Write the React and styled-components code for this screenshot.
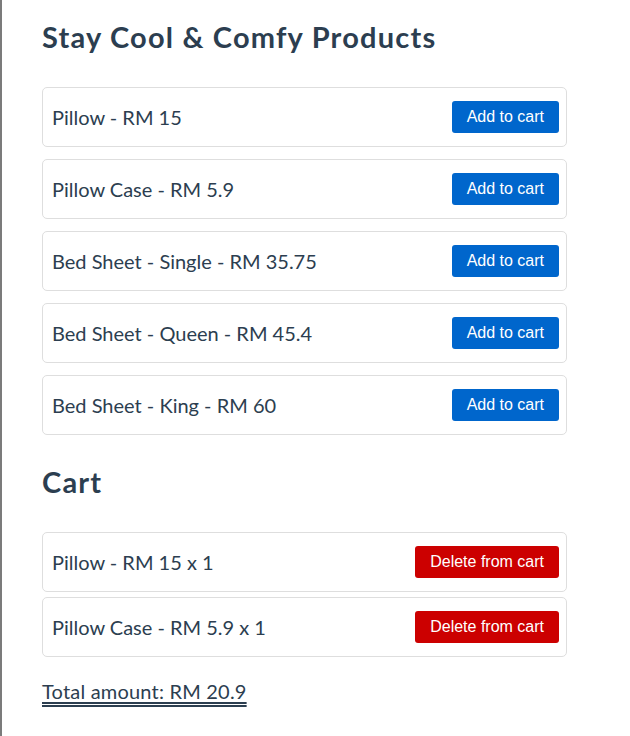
import React, { useState } from 'react';
import styled, { createGlobalStyle } from 'styled-components';

const GlobalStyle = createGlobalStyle`
  html, body {
    margin: 0;
    padding: 0;
    background: #fff;
  }
  body {
    font-family: Lato, "Noto Sans", sans-serif;
    color: #2c3e50;
  }
`;

const Page = styled.div`
  min-height: 736px;
  box-sizing: border-box;
  border-left: 2px solid #7b7b7b;
  padding: 20px 0 0 40px;
`;

const Shop = styled.div`
  width: 525px;
`;

const Title = styled.h1`
  margin: 0 0 33px;
  font-size: 29px;
  font-weight: 700;
  line-height: 34px;
  letter-spacing: 1.2px;
`;

const SubTitle = styled(Title)`
  margin: 30px 0 33px;
`;

const List = styled.div`
  display: flex;
  flex-direction: column;
  gap: ${props => props.gap}px;
`;

const Item = styled.div`
  display: flex;
  align-items: center;
  justify-content: space-between;
  height: 58px;
  padding: 0 7px 0 9px;
  border: 1px solid #dedede;
  border-radius: 5px;
`;

const Label = styled.span`
  font-size: 20px;
`;

const Button = styled.button`
  font-family: "Liberation Sans", Arial, sans-serif;
  font-size: 16px;
  height: 32px;
  padding: 0 15px;
  border: none;
  border-radius: 3px;
  color: #fff;
  background: ${props => (props.danger ? '#cc0000' : '#0066cc')};
  cursor: pointer;
`;

const Total = styled.p`
  margin: 22px 0 0;
  font-size: 20px;
  letter-spacing: 0.2px;
  display: inline-block;
  text-decoration: underline double;
  text-decoration-thickness: 1.5px;
  text-underline-offset: 3px;
`;

const products = [
  { name: 'Pillow', price: 15 },
  { name: 'Pillow Case', price: 5.9 },
  { name: 'Bed Sheet - Single', price: 35.75 },
  { name: 'Bed Sheet - Queen', price: 45.4 },
  { name: 'Bed Sheet - King', price: 60 },
];

export default function App() {
  const [cart, setCart] = useState([
    { name: 'Pillow', price: 15, qty: 1 },
    { name: 'Pillow Case', price: 5.9, qty: 1 },
  ]);

  const add = p => {
    setCart(c => {
      const found = c.find(i => i.name === p.name);
      if (found) return c.map(i => (i.name === p.name ? { ...i, qty: i.qty + 1 } : i));
      return [...c, { ...p, qty: 1 }];
    });
  };

  const remove = name => setCart(c => c.filter(i => i.name !== name));

  const total = Math.round(cart.reduce((s, i) => s + i.price * i.qty, 0) * 100) / 100;

  return (
    <>
      <GlobalStyle />
      <Page>
        <Shop>
          <Title>{'Stay Cool & Comfy Products'}</Title>
          <List gap={12}>
            {products.map(p => (
              <Item key={p.name}>
                <Label>{`${p.name} - RM ${p.price}`}</Label>
                <Button onClick={() => add(p)}>{'Add to cart'}</Button>
              </Item>
            ))}
          </List>
          <SubTitle>{'Cart'}</SubTitle>
          <List gap={5}>
            {cart.map(i => (
              <Item key={i.name}>
                <Label>{`${i.name} - RM ${i.price} x ${i.qty}`}</Label>
                <Button danger onClick={() => remove(i.name)}>{'Delete from cart'}</Button>
              </Item>
            ))}
          </List>
          <Total>{`Total amount: RM ${total}`}</Total>
        </Shop>
      </Page>
    </>
  );
}
